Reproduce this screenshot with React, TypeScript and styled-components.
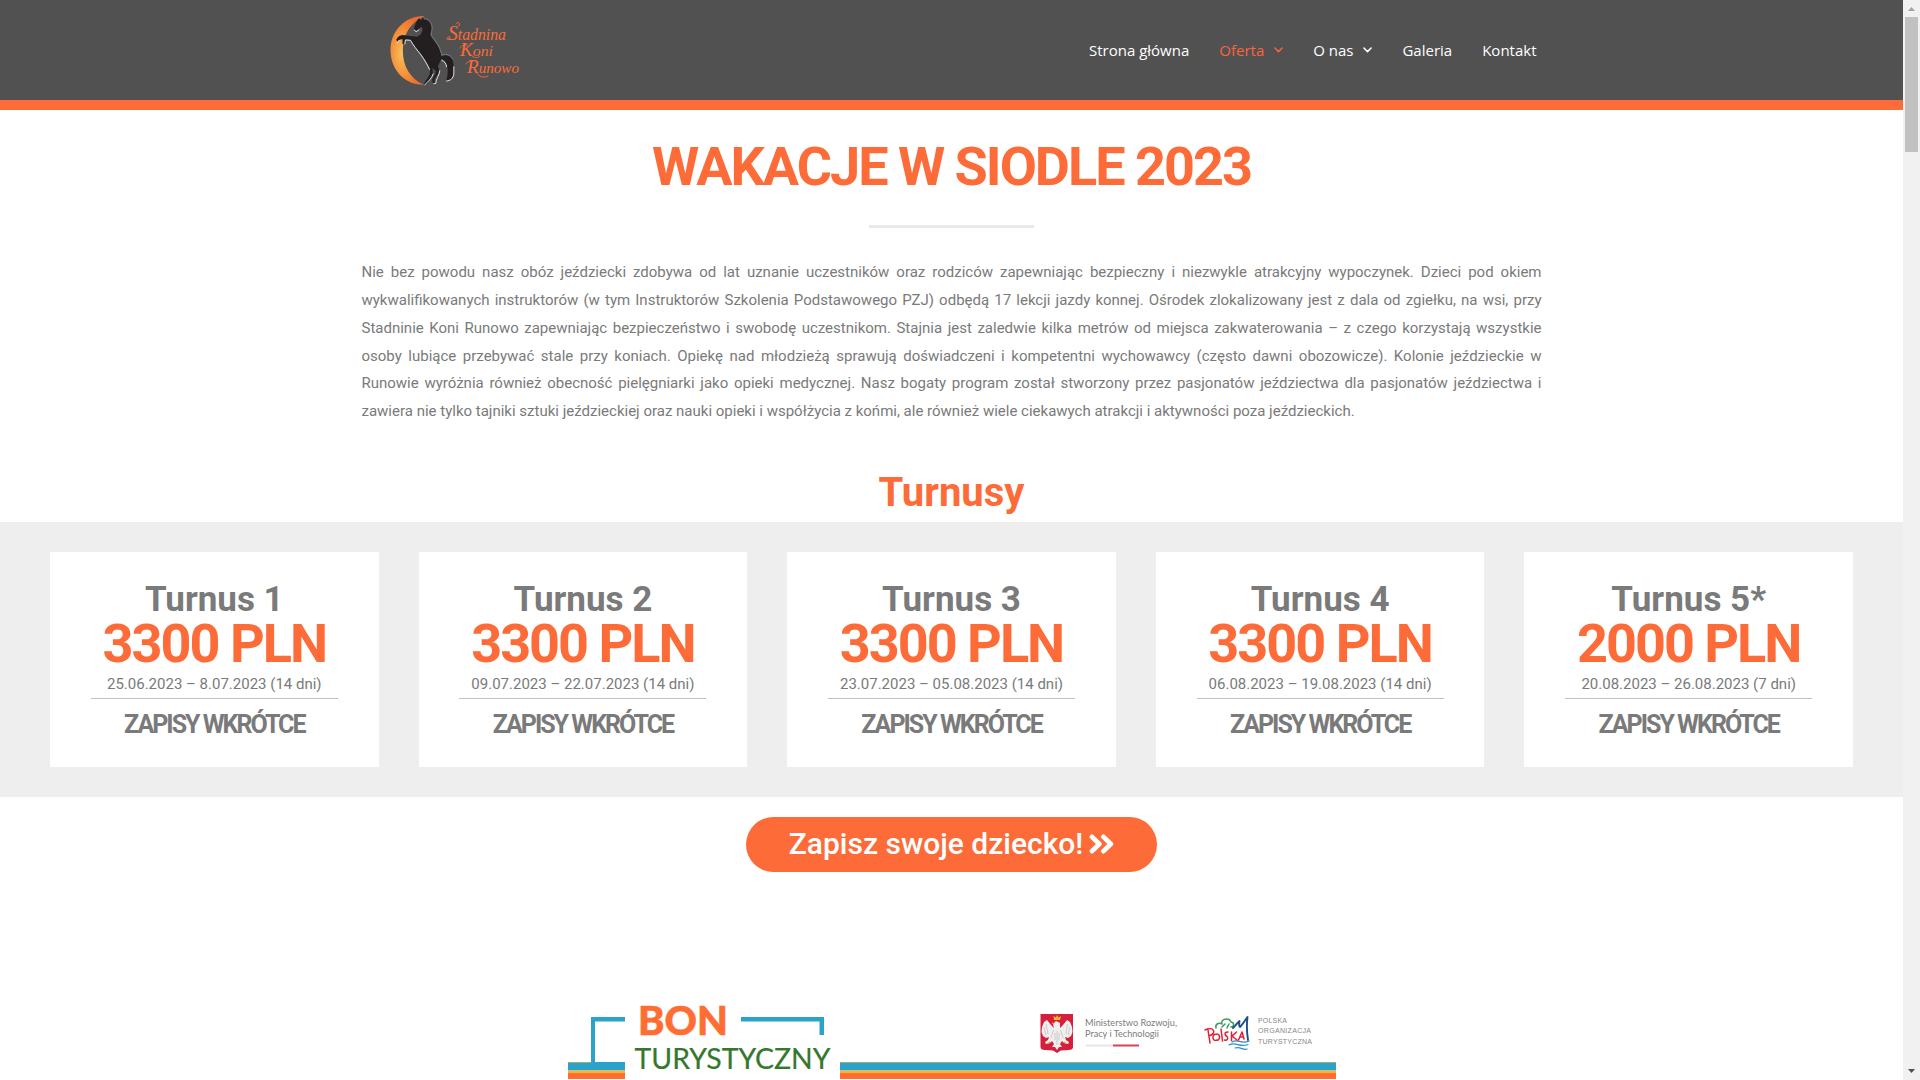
import React from "react";
import styled, { createGlobalStyle } from "styled-components";

const ORANGE = "#fc6b38";
const GREY = "#7a7a7a";

const GlobalStyle = createGlobalStyle`
  * { box-sizing: border-box; }
  html, body { margin: 0; padding: 0; overflow: hidden; background: #fff; }
  body { font-family: Roboto, "Liberation Sans", sans-serif; color: ${GREY}; }
`;

const Window = styled.div`
  display: flex;
  width: 1920px;
  height: 1080px;
  overflow: hidden;
`;

const Page = styled.div`
  width: 1903px;
  height: 1080px;
  overflow: hidden;
  display: flex;
  flex-direction: column;
  align-items: center;
`;

const Header = styled.header`
  width: 100%;
  height: 110px;
  flex: none;
  background: #515151;
  border-bottom: 10px solid ${ORANGE};
  display: flex;
  justify-content: center;
`;

const HeaderInner = styled.div`
  width: 1180px;
  height: 100px;
  display: flex;
  justify-content: space-between;
  align-items: center;
  padding: 0 5px 0 18px;
`;

const Nav = styled.nav`
  display: flex;
  gap: 30px;
`;

const NavLink = styled.a<{ $active?: boolean }>`
  display: flex;
  align-items: center;
  gap: 10px;
  font: 400 15px/20px "Open Sans", sans-serif;
  color: ${(p) => (p.$active ? "#f9643f" : "#fff")};
  white-space: nowrap;
`;

const Title = styled.h1`
  margin: 30px 0 0;
  font-size: 54px;
  line-height: 53px;
  font-weight: 700;
  letter-spacing: -2px;
  color: ${ORANGE};
`;

const Divider = styled.div`
  width: 165px;
  height: 3px;
  margin-top: 32px;
  background: #e9e9e9;
  flex: none;
`;

const Intro = styled.p`
  width: 1180px;
  margin: 31.25px 0 0;
  font-size: 15px;
  line-height: 27.75px;
  text-align: justify;
`;

const Subtitle = styled.h2`
  margin: 46.25px 0 0;
  font-size: 40px;
  line-height: 41px;
  font-weight: 700;
  color: ${ORANGE};
`;

const Terms = styled.section`
  width: 100%;
  height: 275px;
  flex: none;
  margin-top: 9px;
  padding: 30px 50px;
  background: #eee;
  display: grid;
  grid-template-columns: repeat(5, 1fr);
  gap: 40px;
`;

const Card = styled.article`
  background: #fff;
  display: flex;
  flex-direction: column;
  align-items: center;
  padding-top: 30px;
  white-space: nowrap;
`;

const CardName = styled.h3`
  margin: 0;
  font-size: 35px;
  line-height: 35px;
  font-weight: 700;
`;

const Price = styled.div`
  margin-bottom: 1px;
  font-size: 54px;
  line-height: 53px;
  font-weight: 700;
  letter-spacing: -2px;
  color: ${ORANGE};
`;

const Dates = styled.div`
  margin-bottom: 1px;
  font-size: 15px;
  line-height: 26px;
`;

const Rule = styled.div`
  width: 247px;
  height: 1px;
  flex: none;
  background: #c0c0c0;
`;

const Status = styled.div`
  margin-top: 13px;
  font-size: 25px;
  line-height: 25px;
  font-weight: 700;
  letter-spacing: -2px;
`;

const SignUp = styled.a`
  margin-top: 20px;
  padding-bottom: 2px;
  width: 411px;
  height: 55px;
  flex: none;
  border-radius: 28px;
  background: ${ORANGE};
  color: #fff;
  display: flex;
  align-items: center;
  justify-content: center;
  gap: 6px;
  font-size: 30px;
  font-weight: 500;
  line-height: 31px;
`;

const Voucher = styled.svg`
  display: block;
  flex: none;
  margin-top: 118px;
`;

const Scrollbar = styled.div`
  width: 17px;
  height: 1080px;
  background: #f1f1f1;
  display: flex;
  flex-direction: column;
  align-items: center;
`;

const ArrowBox = styled.div`
  width: 17px;
  height: 17px;
  flex: none;
  svg { display: block; }
`;

const Thumb = styled.div`
  width: 13px;
  height: 135px;
  background: #c1c1c1;
`;

const Spacer = styled.div`
  flex: 1;
`;

const Chevron = () => (
  <svg width="9" height="6" viewBox="0 0 9 6" fill="none" stroke="currentColor" strokeWidth="1.5" strokeLinecap="round" strokeLinejoin="round">
    <path d="M.9 1 4.5 4.6 8.1 1" />
  </svg>
);

const Logo = () => (
  <svg width="144" height="80" viewBox="0 0 144 80">
    <defs>
      <radialGradient id="moon" cx="0.35" cy="0.55" r="0.6">
        <stop offset="0" stopColor="#fbc25e" />
        <stop offset="0.45" stopColor="#f5983f" />
        <stop offset="1" stopColor="#ee6a2e" />
      </radialGradient>
    </defs>
    <g transform="scale(0.33333) translate(-28.5 -30)">
      <path d="M163 48C105 46 60 92 60 150C60 210 104 256 160 254C120 236 97 200 97 152C97 104 120 66 163 48Z" fill="url(#moon)" />
      <path
        d="M146 54L151 59L156 52L160 58C172 58 182 68 183 82C184 94 178 100 181 108C190 122 206 138 211 160L213 168C222 164 238 164 245 178C252 196 252 220 244 234C238 240 232 242 227 242C231 230 234 214 230 198C227 186 220 178 212 178C209 186 206 192 202 198L207 212C204 224 193 232 192 241L195 250L187 250L185 238L194 222L196 213L186 204L187 222C184 234 173 242 169 252L160 253C163 242 174 234 178 221L179 206C170 188 160 172 150 160C138 146 128 132 121 119L106 117C101 120 103 124 101 131L96 132L96 118C88 117 84 121 81 126L77 119C82 109 90 105 98 105L118 108L140 110C150 106 157 97 156 84C152 80 147 82 144 88L136 93L130 88C134 76 136 64 146 54Z"
        fill="#231f20"
      />
      <path
        d="M103 132L105 120L120 121C128 136 140 150 150 163C162 179 170 194 177 208M80 128L86 121M163 254C171 246 184 236 188 222M190 251L196 250C195 240 207 226 208 212M228 243C240 242 248 236 250 222V200M214 181C222 184 227 190 228 200M131 90L137 95L145 90"
        fill="none"
        stroke="#f4f4f4"
        strokeWidth="2.600"
        strokeLinecap="round"
        strokeLinejoin="round"
      />
      <path
        d="M160 56C174 56 184 68 185 82C186 94 180 100 183 107C192 120 208 137 213 160L214 166C224 161 240 163 247 177M146 53L151 58L156 51"
        fill="none"
        stroke="#8b8b8b"
        strokeWidth="2"
        strokeLinejoin="round"
      />
    </g>
    <g fontFamily='"Liberation Serif", serif' fontStyle="italic" fill={ORANGE}>
      <text x="68" y="29.500" fontSize="16" textLength="58" lengthAdjust="spacingAndGlyphs"><tspan fontSize="20">S</tspan>tadnina</text>
      <text x="80" y="46" fontSize="15" textLength="33" lengthAdjust="spacingAndGlyphs"><tspan fontSize="18">K</tspan>oni</text>
      <text x="87" y="63" fontSize="15" textLength="52" lengthAdjust="spacingAndGlyphs"><tspan fontSize="19">R</tspan>unowo</text>
    </g>
    <g fill="none" stroke={ORANGE} strokeLinecap="round">
      <path d="M79 16C80 12 78 11 76 14M68 27C66 28 66 30 69 29.500" strokeWidth="1" />
      <path d="M80 38C81 35 85 35 88 35M92 46C95 48.500 98 48 100 46" strokeWidth="0.800" />
      <path d="M86 54C87 51.500 91 51 95 51M96 62C99 67 104 68.500 108 66" strokeWidth="0.900" />
    </g>
  </svg>
);

const DoubleAngle = () => (
  <svg width="25" height="20" viewBox="0 0 25 20" fill="none" stroke="#fff" strokeWidth="4.800" strokeLinecap="round" strokeLinejoin="round">
    <path d="M3 2.900 10.300 10 3 17.100M14.500 2.900 21.800 10 14.500 17.100" />
  </svg>
);

const VoucherBanner = () => (
  <Voucher width="768" height="90" viewBox="0 0 768 90">
    <g fill="#2aa2c9">
      <path d="M0 73H23V27H57V31.500H27V72H57V80.500H0Z" />
      <path d="M173 27H256V45H251.500V31.500H173Z" />
      <path d="M272 73H768V80.500H272Z" />
    </g>
    <path d="M0 72.300H23V73.500H0ZM272 72.300H768V73.500H272Z" fill="#5f9a76" />
    <path d="M0 80.500H57V83H0ZM272 80.500H768V83H272Z" fill="#f2b632" />
    <path d="M0 83H57V89H0ZM272 83H768V89H272Z" fill="#ff6d33" />
    <text x="70" y="45" fontFamily="Lato, sans-serif" fontWeight="900" fontSize="39" fill="#ff6d33" stroke="#ff6d33" strokeWidth="0.6" textLength="90" lengthAdjust="spacingAndGlyphs">BON</text>
    <text x="66.500" y="78.500" fontFamily="Lato, sans-serif" fontSize="28" fill="#34782f" stroke="#34782f" strokeWidth="0.2" textLength="196" lengthAdjust="spacingAndGlyphs">TURYSTYCZNY</text>

    <path d="M472.500 24H505V57Q505 60 501 60L493 60.500L489 63L485 60.500L477 60Q472.500 60 472.500 57Z" fill="#d51f3c" />
    <path
      d="M488 31L485 34L486 38L483 35L479 30L476 32L474 37L473.500 42L475 46L478 48L481 47L480 50L477 52L478 54L482 53L484 51L486 54L484 57L487 57L489 60L491 57L494 57L492 54L494 51L496 53L500 54L501 52L498 50L497 47L500 48L503 46L504.500 42L504 37L502 32L499 30L495 35L492 38L492 33Z"
      fill="#efeff0"
    />
    <path d="M478 34L480 44M476 37L478 45M499.500 34L498 44M502 37L500 45M485.500 40L483 48M492.500 40L495 48M487 43V50M491 43V50M489 41V55" fill="none" stroke="#c3b9be" strokeWidth="0.700" />
    <path d="M486 30L485.500 26L488 27.500L489 25L490.500 27.500L493 26L492 30Z" fill="#f2b632" />
    <path d="M484 33L486 33.500M480 53.500L482 52M498 53.500L496 52" stroke="#e3ad42" strokeWidth="1.200" />
    <g fontFamily="Lato, sans-serif" fontSize="9.300" fill="#7b7b80">
      <text x="517" y="36" textLength="92" lengthAdjust="spacingAndGlyphs">Ministerstwo Rozwoju,</text>
      <text x="517" y="47" textLength="74" lengthAdjust="spacingAndGlyphs">Pracy i Technologii</text>
    </g>
    <path d="M518 54.500H545V56.500H518Z" fill="#e6e6e8" />
    <path d="M545 54.500H571V56.500H545Z" fill="#d5425a" />

    <g fill="none" strokeLinecap="round" strokeLinejoin="round">
      <path d="M648 38C647 34 651 32 654 34C652 29 661 27 663 32C667 33 666 37 663 37M654 37L657 34M659 38L661 34" stroke="#3d9b62" strokeWidth="1.500" />
      <path d="M665 38C668 35 670 32 671.500 31C671 34 671 37 672 37C675 34 678 29 679.500 27C678.500 35 679 44 680 50" stroke="#1e4f87" strokeWidth="1.900" />
      <path d="M664 52C670 48 673 55 681 51M661 55C668 51 671 58 680 54.500M667 58C673 56 675 61 679 59" stroke="#2b91c2" strokeWidth="1.200" />
      <path d="M640 40L642 53M637 40C645 36 650 43 641 46M648 44.500A2.400 3 0 1 0 648.500 50A2.400 3 0 1 0 648 44.500M653 39L654.500 51M660 42C656 42 656.500 45 659 46.500C661 49 658.500 51 656.500 50M663.500 42V50.500M668.500 42L664 46L669 50M670.500 50L674 42L676 49M672 47H675.500" stroke="#e01f35" strokeWidth="1.500" />
    </g>
    <g fontFamily='"Liberation Sans", sans-serif' fontSize="7" fill="#88888b">
      <text x="690" y="32.500" textLength="29">POLSKA</text>
      <text x="690" y="43" textLength="53">ORGANIZACJA</text>
      <text x="690" y="53.500" textLength="54">TURYSTYCZNA</text>
    </g>
  </Voucher>
);

const terms = [
  { name: "Turnus 1", price: "3300 PLN", dates: "25.06.2023 – 8.07.2023 (14 dni)" },
  { name: "Turnus 2", price: "3300 PLN", dates: "09.07.2023 – 22.07.2023 (14 dni)" },
  { name: "Turnus 3", price: "3300 PLN", dates: "23.07.2023 – 05.08.2023 (14 dni)" },
  { name: "Turnus 4", price: "3300 PLN", dates: "06.08.2023 – 19.08.2023 (14 dni)" },
  { name: "Turnus 5*", price: "2000 PLN", dates: "20.08.2023 – 26.08.2023 (7 dni)" },
];

export default function App() {
  return (
    <Window>
      <GlobalStyle />
      <Page>
        <Header>
          <HeaderInner>
            <Logo />
            <Nav>
              <NavLink>Strona główna</NavLink>
              <NavLink $active>Oferta <Chevron /></NavLink>
              <NavLink>O nas <Chevron /></NavLink>
              <NavLink>Galeria</NavLink>
              <NavLink>Kontakt</NavLink>
            </Nav>
          </HeaderInner>
        </Header>
        <Title>WAKACJE W SIODLE 2023</Title>
        <Divider />
        <Intro>
          Nie bez powodu nasz obóz jeździecki zdobywa od lat uznanie uczestników oraz rodziców zapewniając bezpieczny i
          niezwykle atrakcyjny wypoczynek. Dzieci pod okiem wykwalifikowanych instruktorów (w tym Instruktorów Szkolenia
          Podstawowego PZJ) odbędą 17 lekcji jazdy konnej. Ośrodek zlokalizowany jest z dala od zgiełku, na wsi, przy
          Stadninie Koni Runowo zapewniając bezpieczeństwo i swobodę uczestnikom. Stajnia jest zaledwie kilka metrów od
          miejsca zakwaterowania – z czego korzystają wszystkie osoby lubiące przebywać stale przy koniach. Opiekę nad
          młodzieżą sprawują doświadczeni i kompetentni wychowawcy (często dawni obozowicze). Kolonie jeździeckie w
          Runowie wyróżnia również obecność pielęgniarki jako opieki medycznej. Nasz bogaty program został stworzony
          przez pasjonatów jeździectwa dla pasjonatów jeździectwa i zawiera nie tylko tajniki sztuki jeździeckiej oraz
          nauki opieki i współżycia z końmi, ale również wiele ciekawych atrakcji i aktywności poza jeździeckich.
        </Intro>
        <Subtitle>Turnusy</Subtitle>
        <Terms>
          {terms.map((t) => (
            <Card key={t.name}>
              <CardName>{t.name}</CardName>
              <Price>{t.price}</Price>
              <Dates>{t.dates}</Dates>
              <Rule />
              <Status>ZAPISY WKRÓTCE</Status>
            </Card>
          ))}
        </Terms>
        <SignUp>
          Zapisz swoje dziecko!
          <DoubleAngle />
        </SignUp>
        <VoucherBanner />
      </Page>
      <Scrollbar>
        <ArrowBox>
          <svg width="17" height="17"><path d="M5 11 8.500 7 12 11Z" fill="#a3a3a3" /></svg>
        </ArrowBox>
        <Thumb />
        <Spacer />
        <ArrowBox>
          <svg width="17" height="17"><path d="M5 6 8.500 10 12 6Z" fill="#505050" /></svg>
        </ArrowBox>
      </Scrollbar>
    </Window>
  );
}
